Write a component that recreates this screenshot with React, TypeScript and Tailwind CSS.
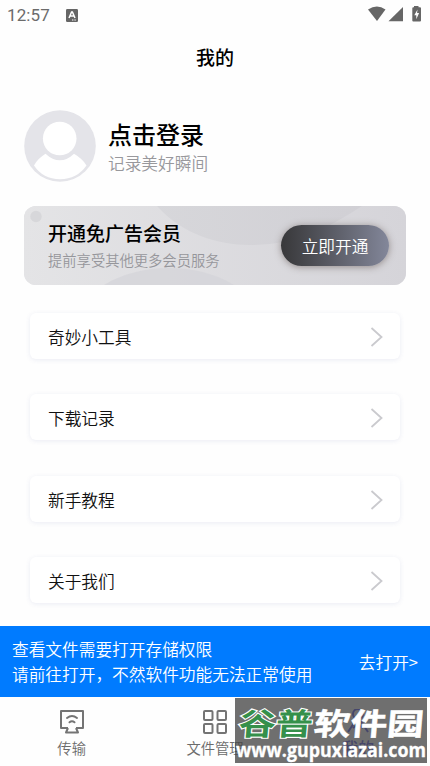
import React from "react";

const menu = ["奇妙小工具", "下载记录", "新手教程", "关于我们"];

function StatusBar() {
  return (
    <div className="flex h-[30px] items-center pl-[7px] pr-[8px] text-[#6b6b6b]">
      <span className="w-[59px] font-['Roboto',sans-serif] text-[17px] leading-[30px] tracking-[0.1px]">12:57</span>
      <svg width="12" height="13" viewBox="0 0 12 13">
        <rect width="12" height="13" rx="1.2" fill="#666" />
        <path d="M3 9 5.6 3H6.4L9 9M4.2 7H7.8" fill="none" stroke="#fff" strokeWidth="1.5" />
        <path d="M6 11h4" stroke="#fff" strokeWidth="1" strokeDasharray="1 .6" />
      </svg>
      <svg className="ml-auto" width="55" height="18" viewBox="0 0 55 18" fill="#666">
        <path d="M1 3.500Q10 -2.600 18.500 3.500L10 15Z" />
        <path d="M36 1V15.200H21.500Z" />
        <path d="M47 0h4.500v1.200H53q1 0 1 1V14.400q0 1-1 1h-6.700q-1 0-1-1V2.200q0-1 1-1h.7Z" />
        <path d="M50.500 3.400 47.300 9.200h2v4l2.800-6.300h-2Z" fill="#fff" />
      </svg>
    </div>
  );
}

function Avatar() {
  return (
    <svg width="72" height="72" viewBox="0 0 72 72" className="shrink-0">
      <circle cx="36" cy="36" r="35.8" fill="#e4e4e9" />
      <circle cx="35.700" cy="28.500" r="16.800" fill="#fff" />
      <path d="M10 55.500Q13 49 21.500 43.700Q36 57 50 43.700Q59 49 62.500 55.500Q53 69.200 36 69.200T10 55.500Z" fill="#fff" />
    </svg>
  );
}

function MemberCard() {
  return (
    <section className="relative mx-[24px] mt-[24px] flex h-[79px] items-center justify-between overflow-hidden rounded-[12px] bg-[#e0e0e3] pl-[24px] pr-[17px]">
      <svg className="absolute inset-0" width="382" height="79" viewBox="0 0 382 79">
        <defs>
          <linearGradient id="base"><stop stopColor="#e4e4e6" /><stop offset="1" stopColor="#d5d4d9" /></linearGradient>
          <linearGradient id="arc"><stop stopColor="#d5d5d9" /><stop offset="1" stopColor="#cfced3" /></linearGradient>
        </defs>
        <path d="M0 0H382V79H0Z" fill="url(#base)" />
        <path d="M133 0C158 28 194 39 225 39C271 39 301 24 338 0Z" fill="url(#arc)" opacity=".8" />
        <path d="M80 79C114 58 170 55 210 79Z" fill="#d5d5d9" opacity=".8" />
        <circle cx="12" cy="10.500" r="5.700" fill="#d7d7da" />
      </svg>
      <div className="relative">
        <h2 className="text-[19px] font-medium leading-[28px] text-black">开通免广告会员</h2>
        <p className="text-[14.3px] font-[350] leading-[25px] text-[#96969b]">提前享受其他更多会员服务</p>
      </div>
      <button className="relative h-[41px] w-[108px] rounded-full bg-linear-to-r from-[#38383a] to-[#83879a] text-[16.7px] font-[350] leading-[43px] text-white shadow-[0_1px_7px_rgba(80,65,60,0.5)]">立即开通</button>
    </section>
  );
}

function TransferIcon() {
  return (
    <svg width="26" height="26" viewBox="0 0 26 26" fill="none" stroke="#747474" strokeWidth="2" strokeLinejoin="round">
      <path d="M9 19H2V2h22v17h-7M9 19l-2 4.500h12l-2-4.500" />
      <path d="M8 9q5-4 10 0M10.500 13.300q2.500-2 5 0" strokeLinecap="round" />
    </svg>
  );
}

function FilesIcon() {
  return (
    <svg width="26" height="26" viewBox="0 0 26 26" fill="none" stroke="#747474" strokeWidth="2">
      <rect x="2" y="2" width="8.500" height="9" rx="1" />
      <rect x="15.500" y="2" width="8.500" height="9" rx="1" />
      <rect x="2" y="15" width="8.500" height="9" rx="1" />
      <rect x="15.500" y="15" width="8.500" height="9" rx="1" />
    </svg>
  );
}

function PersonIcon() {
  return (
    <svg width="26" height="26" viewBox="0 0 26 26" fill="none" stroke="#5050e8" strokeWidth="2">
      <circle cx="13" cy="5" r="5" />
      <path d="M11 11 3 23M15 11l8 12M8 19q5-5 10 0" />
    </svg>
  );
}

function Watermark() {
  return (
    <div className="absolute left-[235px] top-px h-[65px] w-[192px] bg-[#444444]/77">
      <svg width="192" height="65" viewBox="0 0 192 65" className="overflow-visible">
        <g transform="translate(4 36.500) skewX(-5)" fontFamily="'Noto Sans CJK SC', sans-serif" fontWeight="700" fontSize="30.500">
          <text x="-1" y="0" textLength="74" lengthAdjust="spacingAndGlyphs" fill="#35904b" stroke="#fff" strokeWidth="2.200" paintOrder="stroke">谷普</text>
          <text x="74" y="0" textLength="110" lengthAdjust="spacingAndGlyphs" fill="#fff" stroke="#fff" strokeWidth=".5">软件园</text>
        </g>
        <text x="1" y="58.500" textLength="190" lengthAdjust="spacingAndGlyphs" fill="#fff" stroke="#fff" strokeWidth=".3" fontFamily="'Open Sans', sans-serif" fontWeight="700" fontSize="19">www.gupuxiazai.com</text>
      </svg>
    </div>
  );
}

export default function App() {
  return (
    <main className="flex h-[766px] w-[430px] flex-col overflow-hidden bg-[#fefefe] font-['Noto_Sans_CJK_SC',sans-serif] text-[#111]">
      <StatusBar />
      <h1 className="h-[54px] text-center text-[19px] font-medium leading-[54px] text-black">我的</h1>
      <section className="mt-[26px] flex h-[72px] gap-[12px] pl-[24px]">
        <Avatar />
        <div>
          <h2 className="mt-[7px] text-[24px] font-medium leading-[34px] text-black">点击登录</h2>
          <p className="text-[16.7px] font-[350] leading-[24px] text-[#98989c]">记录美好瞬间</p>
        </div>
      </section>
      <MemberCard />
      <nav className="mx-[30px] mt-[28px] flex flex-col gap-[35.300px]">
        {menu.map((label) => (
          <a key={label} className="flex h-[46px] items-center justify-between rounded-[6px] bg-white pl-[18px] pr-[17px] text-[16.7px] font-[350] leading-[46px] shadow-[0_1px_5px_rgba(70,80,160,0.10)]">
            <span className="pt-[2px]">{label}</span>
            <svg className="mt-[2px]" width="13" height="22" viewBox="0 0 13 22" fill="none" stroke="#cacace" strokeWidth="1.800"><path d="M1.500 2 11.500 11 1.500 20" /></svg>
          </a>
        ))}
      </nav>
      <section className="mt-auto flex h-[71.500px] shrink-0 items-center justify-between bg-[#007bff] px-[12px] pt-[2px] text-[16.7px] font-[350] leading-[25px] text-white">
        <p>查看文件需要打开存储权限<br />请前往打开，不然软件功能无法正常使用</p>
        <span>去打开&gt;</span>
      </section>
      <footer className="relative grid h-[69px] shrink-0 grid-cols-3 text-[14.3px] font-[350] leading-[26px] text-[#6b6b6b]">
        <div className="flex flex-col items-center pt-[12px]"><TransferIcon /><span>传输</span></div>
        <div className="flex flex-col items-center pt-[12px]"><FilesIcon /><span>文件管理</span></div>
        <div className="flex flex-col items-center pt-[12px] text-[#5050e8]"><PersonIcon /><span className="text-[16px] font-medium leading-[24px]">我的</span></div>
        <Watermark />
      </footer>
    </main>
  );
}
